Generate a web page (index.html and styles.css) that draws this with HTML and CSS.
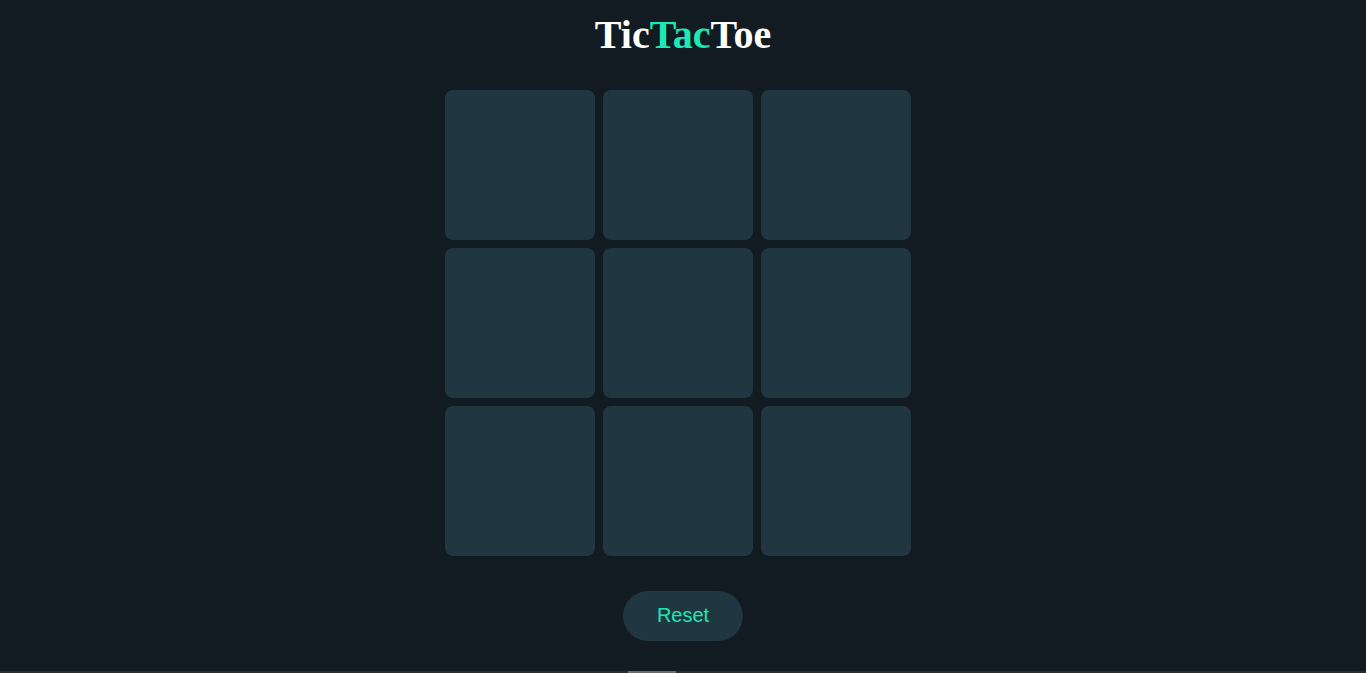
FILE: index.html
```html
<!DOCTYPE html>
<html lang="en">
<head>
<meta charset="utf-8">
<title>TicTacToe</title>
<link rel="stylesheet" href="styles.css">
</head>
<body>
<main class="app">
  <h1 class="title">Tic<span class="accent">Tac</span>Toe</h1>
  <div class="board">
    <button class="cell"></button>
    <button class="cell"></button>
    <button class="cell"></button>
    <button class="cell"></button>
    <button class="cell"></button>
    <button class="cell"></button>
    <button class="cell"></button>
    <button class="cell"></button>
    <button class="cell"></button>
  </div>
  <button class="reset">Reset</button>
</main>
<div class="scrollbar"><div class="thumb"></div></div>
</body>
</html>
```

FILE: styles.css
```css
html, body {
  margin: 0;
  padding: 0;
  background: #111b21;
  height: 100%;
  overflow: hidden;
}
.app {
  display: flex;
  flex-direction: column;
  align-items: center;
}
.title {
  margin: 12px 0 0;
  font-family: "Liberation Serif", "Times New Roman", serif;
  font-weight: bold;
  font-size: 40px;
  line-height: 46px;
  color: #ffffff;
}
.accent {
  color: #1de9b6;
}
.board {
  margin: 32px 10px 0 0;
  display: grid;
  grid-template-columns: repeat(3, 150px);
  grid-auto-rows: 150px;
  gap: 8px;
}
.cell {
  border: none;
  border-radius: 8px;
  background: #203640;
  padding: 0;
}
.reset {
  margin-top: 35px;
  width: 120px;
  height: 50px;
  padding: 0 0 3px;
  border: none;
  border-radius: 25px;
  background: #203640;
  color: #1de9b6;
  font-family: "Liberation Sans", Arial, sans-serif;
  font-size: 20px;
  line-height: 20px;
}
.scrollbar {
  position: fixed;
  left: 0;
  right: 0;
  bottom: 0;
  height: 2px;
  background: #2a2e31;
}
.thumb {
  margin-left: 628px;
  width: 48px;
  height: 2px;
  background: #686b6e;
}
```
